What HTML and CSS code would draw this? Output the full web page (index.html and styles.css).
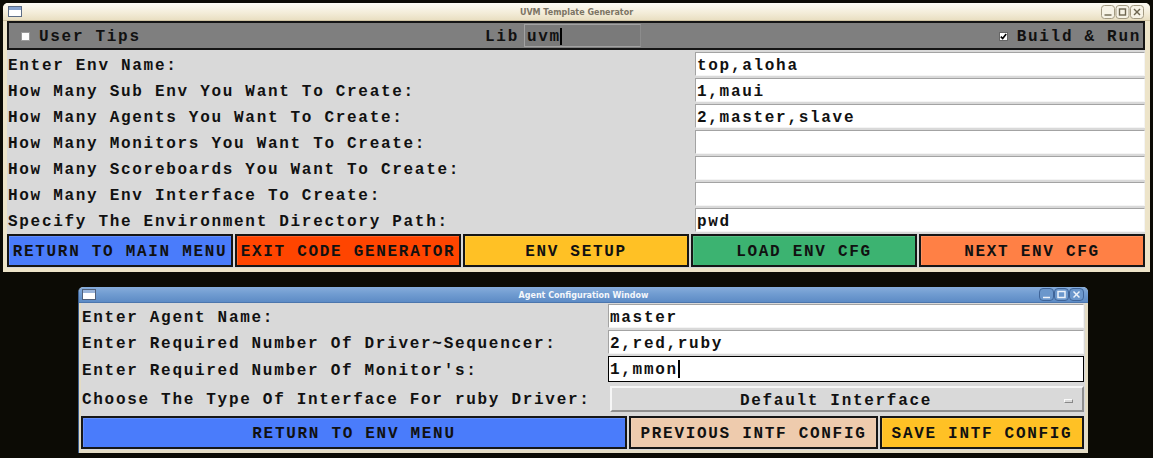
FILE: index.html
```html
<!DOCTYPE html>
<html>
<head>
<meta charset="utf-8">
<title>UVM Template Generator</title>
<link rel="stylesheet" href="styles.css">
</head>
<body>
<div class="window win-main">
  <div class="titlebar cream">
    <div class="tb-left">
      <svg class="win-icon" width="14" height="11" viewBox="0 0 14 11"><rect x="0.5" y="0.5" width="13" height="10" fill="#fff" stroke="#5d6d86"/><rect x="1" y="1" width="12" height="3" fill="#86a3cf"/></svg>
    </div>
    <div class="title">UVM Template Generator</div>
    <div class="tb-right">
      <svg width="44" height="14" viewBox="0 0 44 14">
        <g fill="#f7f3e6" stroke="#a39a82">
          <rect x="0.5" y="0.5" width="13" height="13" rx="3"/>
          <rect x="15" y="0.5" width="13" height="13" rx="3"/>
          <rect x="29.5" y="0.5" width="13" height="13" rx="3"/>
        </g>
        <g stroke="#6e6650" fill="none" stroke-width="1.4">
          <line x1="3.5" y1="10" x2="10.5" y2="10"/>
          <rect x="18.5" y="4" width="6" height="6"/>
          <line x1="33" y1="4" x2="39" y2="10"/><line x1="39" y1="4" x2="33" y2="10"/>
        </g>
      </svg>
    </div>
  </div>
  <div class="client">
    <div class="toolbar">
      <div class="tool tool-left"><span class="box"></span><span class="txt">User Tips</span></div>
      <div class="tool tool-lib"><span class="txt">Lib</span><span class="lib-entry"><span class="txt">uvm</span><span class="caret"></span></span></div>
      <div class="tool tool-right"><span class="box checked"><svg width="7" height="7" viewBox="0 0 7 7"><path d="M0.8 3.6 L2.7 5.6 L6.2 1" stroke="#000" stroke-width="1.6" fill="none"/></svg></span><span class="txt">Build &amp; Run</span></div>
    </div>
    <div class="form form-main">
      <div class="label">Enter Env Name:</div><div class="cell"><div class="entry">top,aloha</div></div>
      <div class="label">How Many Sub Env You Want To Create:</div><div class="cell"><div class="entry">1,maui</div></div>
      <div class="label">How Many Agents You Want To Create:</div><div class="cell"><div class="entry">2,master,slave</div></div>
      <div class="label">How Many Monitors You Want To Create:</div><div class="cell"><div class="entry"></div></div>
      <div class="label">How Many Scoreboards You Want To Create:</div><div class="cell"><div class="entry"></div></div>
      <div class="label">How Many Env Interface To Create:</div><div class="cell"><div class="entry"></div></div>
      <div class="label">Specify The Environment Directory Path:</div><div class="cell"><div class="entry">pwd</div></div>
    </div>
    <div class="btnrow btnrow-main">
      <div class="btn c-blue">RETURN TO MAIN MENU</div>
      <div class="btn c-red">EXIT CODE GENERATOR</div>
      <div class="btn c-gold">ENV SETUP</div>
      <div class="btn c-green">LOAD ENV CFG</div>
      <div class="btn c-sienna">NEXT ENV CFG</div>
    </div>
  </div>
</div>

<div class="window win-agent">
  <div class="titlebar blue">
    <div class="tb-left">
      <svg class="win-icon" width="14" height="11" viewBox="0 0 14 11"><rect x="0.5" y="0.5" width="13" height="10" fill="#fff" stroke="#50607a"/><rect x="1" y="1" width="12" height="3" fill="#9bb5da"/></svg>
    </div>
    <div class="title">Agent Configuration Window</div>
    <div class="tb-right">
      <svg width="45" height="13" viewBox="0 0 45 13">
        <g fill="#6b97cc" stroke="#3f6498">
          <rect x="0.5" y="0.5" width="14" height="12" rx="3.5"/>
          <rect x="15.5" y="0.5" width="14" height="12" rx="3.5"/>
          <rect x="30.5" y="0.5" width="14" height="12" rx="3.5"/>
        </g>
        <g stroke="#eef3fa" fill="none" stroke-width="1.5">
          <line x1="4" y1="9.5" x2="11" y2="9.5"/>
          <rect x="19" y="3.5" width="7" height="6"/>
          <line x1="34.5" y1="3.5" x2="40.5" y2="9.5"/><line x1="40.5" y1="3.5" x2="34.5" y2="9.5"/>
        </g>
      </svg>
    </div>
  </div>
  <div class="client">
    <div class="form form-agent">
      <div class="label">Enter Agent Name:</div><div class="cell"><div class="entry">master</div></div>
      <div class="label">Enter Required Number Of Driver~Sequencer:</div><div class="cell"><div class="entry">2,red,ruby</div></div>
      <div class="label">Enter Required Number Of Monitor's:</div><div class="cell focus"><div class="entry">1,mmon<span class="caret"></span></div></div>
      <div class="label">Choose The Type Of Interface For ruby Driver:</div><div class="cell menu-cell"><div class="menubtn"><span class="menu-text">Default Interface</span><span class="indicator"></span></div></div>
    </div>
    <div class="btnrow btnrow-agent">
      <div class="btn c-blue wide">RETURN TO ENV MENU</div>
      <div class="btn c-peach mid">PREVIOUS INTF CONFIG</div>
      <div class="btn c-gold narrow">SAVE INTF CONFIG</div>
    </div>
  </div>
</div>
</body>
</html>
```
FILE: styles.css
```css
* { box-sizing: border-box; }

body {
  margin: 0;
  width: 1153px;
  height: 458px;
  overflow: hidden;
  position: relative;
  background: #0c0b05;
  font-family: "Liberation Mono", "DejaVu Sans Mono", monospace;
  font-weight: bold;
  font-size: 16px;
  letter-spacing: 1.7px;
  color: #111;
}

/* desktop windows */
.window {
  position: absolute;
  display: flex;
  flex-direction: column;
}

.win-main {
  left: 3px;
  top: 3px;
  width: 1147px;
  height: 269px;
  background: #ede4c9;
  border-radius: 5px 5px 0 0;
  padding-bottom: 4px;
}

.win-agent {
  left: 78px;
  top: 287px;
  width: 1010px;
  height: 166px;
  background: #e4dcc4;
  border-radius: 5px 5px 0 0;
  border-left: 1px solid #3c5f90;
  padding-bottom: 3px;
}

.titlebar {
  display: grid;
  grid-template-columns: 1fr auto 1fr;
  align-items: center;
  border-radius: 5px 5px 0 0;
  letter-spacing: 0;
  font-family: "DejaVu Sans", "Liberation Sans", sans-serif;
  font-size: 8px;
  font-weight: bold;
}

.titlebar.cream {
  height: 18px;
  background: linear-gradient(#fdfbf4, #f3ecd8 60%, #e9dfc2);
  border-bottom: 1px solid #cfc3a2;
  color: #7c7464;
}

.titlebar.blue {
  height: 17px;
  background: linear-gradient(#86acdb, #6f9bd0 50%, #5d8bc5);
  border-bottom: 1px solid #4c76ad;
  color: #f4f7fb;
}

.tb-left { display: flex; align-items: center; padding-left: 5px; }
.tb-right { display: flex; justify-content: flex-end; align-items: center; padding-right: 5px; }
.win-icon { display: block; }
.blue .tb-left { padding-left: 3px; }
.blue .tb-right { padding-right: 4px; }

.title { padding-top: 1px; }

.client {
  flex: 1;
  display: flex;
  flex-direction: column;
  background: #d9d9d9;
}

.win-main .client { margin: 0 5px 0 4px; }
.win-agent .client { margin: 0 3px 0 2px; }

/* toolbar */
.toolbar {
  height: 29px;
  border: 2px solid #151515;
  background: #7f7f7f;
  display: flex;
  align-items: center;
}

.tool { display: flex; align-items: center; white-space: pre; }
.tool .txt { padding-top: 2px; }
.tool-left { flex: 1; padding-left: 12px; }
.tool-right { flex: 1; justify-content: flex-end; padding-right: 2px; }
.tool-lib { margin-right: 36px; gap: 5px; }

.box {
  width: 9px;
  height: 9px;
  background: #fff;
  border: 1px solid #9a9a9a;
  margin-right: 9px;
  margin-top: 1px;
  display: flex;
  align-items: center;
  justify-content: center;
}
.box.checked { border-color: #666; }
.box svg { display: block; }

.lib-entry {
  width: 117px;
  height: 23px;
  background: #7a7a7a;
  border: 1px solid #a2a2a2;
  border-right-color: #8c8c8c;
  padding-left: 2px;
  display: flex;
  align-items: center;
}

.caret {
  display: inline-block;
  width: 2px;
  height: 17px;
  background: #000;
  margin-left: -1px;
  margin-top: 1px;
}

/* forms */
.form {
  display: grid;
  align-items: stretch;
}

.form-main {
  grid-template-columns: 688px 1fr;
  grid-auto-rows: 26px;
  margin-top: 1px;
}

.form-agent {
  grid-template-columns: 527px 1fr;
  grid-template-rows: 26px 26px 28px 31px;
}

.label {
  display: flex;
  align-items: center;
  padding: 3px 0 0 1px;
  white-space: pre;
}

.cell { padding: 1px 0 1px 0; display: flex; }
.form-agent .cell { padding-right: 1px; }

.entry {
  flex: 1;
  background: #fff;
  border: 1px solid;
  border-color: #a3a3a3 #f4f4f4 #f4f4f4 #a3a3a3;
  display: flex;
  align-items: center;
  padding: 3px 0 0 1px;
  white-space: pre;
}

.cell.focus { padding: 1px 1px 1px 0; }
.cell.focus .entry { border: 1px solid #000; padding-top: 2px; }
.cell.focus .caret { height: 18px; margin-left: 0; margin-top: -2px; }

.menu-cell { padding: 3px 2px 2px 2px; }
.menubtn {
  flex: 1;
  position: relative;
  background: #d9d9d9;
  border: 2px solid;
  border-color: #f6f6f6 #8e8e8e #8e8e8e #f6f6f6;
  display: flex;
  align-items: center;
  justify-content: center;
  padding: 3px 22px 0 0;
}
.indicator {
  position: absolute;
  right: 9px;
  top: 11px;
  width: 9px;
  height: 4px;
  background: #d9d9d9;
  border: 1px solid;
  border-color: #fafafa #888 #888 #fafafa;
}

/* buttons */
.btnrow {
  display: flex;
  gap: 2px;
}
.btnrow-main { height: 34px; padding-top: 1px; }
.btnrow-agent { height: 36px; padding: 2px 1px 1px 0; }

.btn {
  flex: 1;
  border: 2px solid #161616;
  display: flex;
  align-items: center;
  justify-content: center;
  padding-top: 3px;
  white-space: pre;
  box-shadow: inset 1px 1px 0 rgba(255,255,255,0.15);
}
.btn.wide { flex: 0 0 546px; }
.btn.mid { flex: 0 0 249px; }
.btn.narrow { flex: 1; }

.c-blue { background: #4a7cfb; }
.c-red { background: #ff4500; }
.c-gold { background: #ffc125; }
.c-green { background: #3cb371; }
.c-sienna { background: #ff8045; }
.c-peach { background: #eecbad; }
```
